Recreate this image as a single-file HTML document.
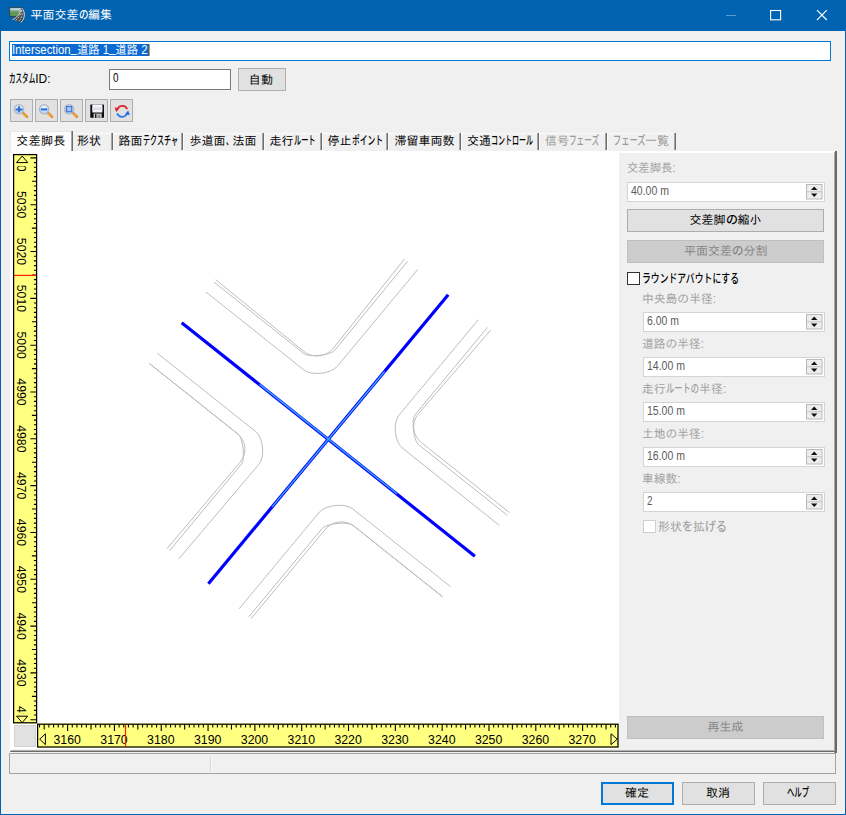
<!DOCTYPE html><html lang="ja"><head><meta charset="utf-8"><title>平面交差の編集</title><style>
html,body{margin:0;padding:0;}
body{width:846px;height:815px;position:relative;overflow:hidden;background:#f0f0f0;font-family:"Liberation Sans","IPAGothic",sans-serif;}
.t{position:absolute;white-space:pre;transform-origin:0 50%;}
.k{display:inline-block;transform-origin:0 50%;font-family:"Liberation Sans","Noto Sans CJK JP",sans-serif;font-weight:500;}
</style></head><body>
<div style="position:absolute;left:0px;top:0px;width:846px;height:815px;background:#0063b1;"></div>
<div style="position:absolute;left:1px;top:31px;width:844px;height:783px;background:#f0f0f0;"></div>
<span class="t" id="title" style="left:30.5px;top:9.0px;font-size:12px;line-height:12px;color:#fff;">平面交差<span class="k" style="transform:scaleX(0.7906);margin-right:-2.52px">の</span>編集</span>
<svg style="position:absolute;left:700px;top:0" width="146" height="31" viewBox="700 0 146 31">
<line x1="726" y1="15.5" x2="736" y2="15.5" stroke="#5a9ad0" stroke-width="1"/>
<rect x="770.6" y="10.5" width="10" height="9.3" fill="none" stroke="#fff" stroke-width="1.1"/>
<path d="M817 10.2 L826.8 20 M826.8 10.2 L817 20" stroke="#fff" stroke-width="1.15" fill="none"/>
</svg>
<svg style="position:absolute;left:8px;top:6px" width="20" height="18" viewBox="8 6 20 18">
<rect x="9.7" y="7.7" width="12" height="8.7" fill="#5d9a55" stroke="#3c3c3c" stroke-width="0.9"/>
<rect x="10.2" y="8.2" width="11" height="2.3" fill="#bcd8f6"/>
<rect x="10.2" y="10.5" width="11" height="1.3" fill="#8fa07c"/>
<path d="M21.6 8 C25.2 11.5 25.6 18 20.9 22.5 L12.5 19.7 C17 17.6 20.2 14 20.3 9.6 Z" fill="#4d4d4d"/>
<path d="M21.6 8 C25.2 11.5 25.6 18 20.9 22.5" fill="none" stroke="#e6e6e6" stroke-width="0.9"/>
<path d="M12.5 19.7 C17 17.6 20.2 14 20.3 9.6" fill="none" stroke="#e6e6e6" stroke-width="0.9"/>
<path d="M21.3 10 C23 13.5 22 18.5 18.2 21.6" fill="none" stroke="#f2f2f2" stroke-width="0.8" stroke-dasharray="1.8 1.5"/>
<path d="M20.9 10.5 C21 14.5 18.8 18.6 15.3 20.6" fill="none" stroke="#f2f2f2" stroke-width="0.8" stroke-dasharray="1.8 1.5"/>
</svg>
<div style="position:absolute;left:9px;top:41px;width:822px;height:20px;background:#fff;border:1px solid #0078d7;box-sizing:border-box;"></div>
<div style="position:absolute;left:11.5px;top:44px;width:137px;height:12.2px;background:#0a6ad2;"></div>
<div style="position:absolute;left:148.5px;top:44px;width:1px;height:12.2px;background:#e0923a;"></div>
<span class="t" id="name" style="left:12px;top:44px;font-size:12px;line-height:12px;color:#fff;transform:scaleX(0.9446);">Intersection<span style="position:relative;top:-1.6px">_</span>道路 1<span style="position:relative;top:-1.6px">_</span>道路 2</span>
<span class="t" id="cid" style="left:9px;top:73px;font-size:12px;line-height:12px;color:#000;"><span class="k" style="transform:scaleX(0.5468);margin-right:-21.76px">カスタム</span>ID:</span>
<div style="position:absolute;left:109px;top:69px;width:122px;height:21px;background:#fff;border:1px solid #7a7a7a;box-sizing:border-box;"></div>
<span class="t" id="cidv" style="left:112.5px;top:72px;font-size:12px;line-height:12px;color:#000;transform:scaleX(0.8224);">0</span>
<div style="position:absolute;left:238px;top:68px;width:48px;height:23px;background:#e1e1e1;border:1px solid #adadad;box-sizing:border-box;"></div>
<span class="t" id="auto" style="left:248.7px;top:73.5px;font-size:12px;line-height:12px;color:#000;letter-spacing:0.3px;">自動</span>
<div style="position:absolute;left:10px;top:99px;width:23px;height:23px;background:#e1e1e1;border:1px solid #adadad;box-sizing:border-box;"></div>
<div style="position:absolute;left:35px;top:99px;width:23px;height:23px;background:#e1e1e1;border:1px solid #adadad;box-sizing:border-box;"></div>
<div style="position:absolute;left:60px;top:99px;width:23px;height:23px;background:#e1e1e1;border:1px solid #adadad;box-sizing:border-box;"></div>
<div style="position:absolute;left:85px;top:99px;width:23px;height:23px;background:#e1e1e1;border:1px solid #adadad;box-sizing:border-box;"></div>
<div style="position:absolute;left:110px;top:99px;width:23px;height:23px;background:#e1e1e1;border:1px solid #adadad;box-sizing:border-box;"></div>
<svg style="position:absolute;left:10px;top:99px" width="125" height="23" viewBox="10 99 125 23"><defs><radialGradient id="lens" cx="0.5" cy="0.3" r="0.75"><stop offset="0" stop-color="#f4f9ff"/><stop offset="1" stop-color="#9cc6f8"/></radialGradient></defs><g transform="translate(0,109.2)"><g transform="translate(19.1,0)">
<line x1="4" y1="4" x2="7.8" y2="7.7" stroke="#cf6a2a" stroke-width="2.5" stroke-linecap="round"/>
<line x1="3.9" y1="4.2" x2="7.6" y2="7.9" stroke="#f8ae2c" stroke-width="1.6" stroke-linecap="round"/>
<circle cx="0" cy="0.1" r="4.7" fill="url(#lens)" stroke="#b2b4b8" stroke-width="1.1"/>
<path d="M-3.4 0.2H3.4M0 -2.9V3" stroke="#2c6cd2" stroke-width="2"/></g><g transform="translate(44.1,0)">
<line x1="4" y1="4" x2="7.8" y2="7.7" stroke="#cf6a2a" stroke-width="2.5" stroke-linecap="round"/>
<line x1="3.9" y1="4.2" x2="7.6" y2="7.9" stroke="#f8ae2c" stroke-width="1.6" stroke-linecap="round"/>
<circle cx="0" cy="0.1" r="4.7" fill="url(#lens)" stroke="#b2b4b8" stroke-width="1.1"/>
<path d="M-3.2 0.2H3.2" stroke="#2c6cd2" stroke-width="2"/></g><g transform="translate(69.1,0)">
<line x1="4" y1="4" x2="7.8" y2="7.7" stroke="#cf6a2a" stroke-width="2.5" stroke-linecap="round"/>
<line x1="3.9" y1="4.2" x2="7.6" y2="7.9" stroke="#f8ae2c" stroke-width="1.6" stroke-linecap="round"/>
<circle cx="0" cy="0.1" r="4.7" fill="url(#lens)" stroke="#b2b4b8" stroke-width="1.1"/>
<rect x="-2.6" y="-2.7" width="5.2" height="5.2" fill="#a8c4f2" stroke="#3a76dc" stroke-width="1.2"/></g></g><g>
<rect x="90.3" y="104.5" width="13.7" height="13.3" rx="0.6" fill="#0c0c0c"/>
<rect x="92.3" y="104.5" width="10.1" height="8" fill="#f2f4f8"/>
<rect x="92.3" y="107.4" width="10.1" height="2.6" fill="#d9deea"/>
<rect x="93.6" y="113.6" width="8" height="4.2" fill="#d8d8d8"/>
<rect x="95" y="114.2" width="1.4" height="3.6" fill="#111"/>
<rect x="97.6" y="114.6" width="0.8" height="3.2" fill="#555"/>
<rect x="99.4" y="114.6" width="0.8" height="3.2" fill="#555"/>
</g><g fill="none" stroke-width="1.7">
<path d="M127.2 109.2 A5.3 5.3 0 0 0 117.6 108.6" stroke="#e02a2a"/>
<path d="M114.6 107.6 L119.6 108.2 L116.2 112 Z" fill="#e02020" stroke="none"/>
<path d="M117.2 113.4 A5.3 5.3 0 0 0 126.8 114.2" stroke="#2a7af0"/>
<path d="M129.8 115 L124.8 114.4 L128.2 110.4 Z" fill="#1a6af0" stroke="none"/>
</g></svg>
<div style="position:absolute;left:10px;top:151px;width:826px;height:602px;background:#f0f0f0;border-top:2px solid #fff;border-left:2px solid #fff;box-sizing:border-box;"></div>
<div style="position:absolute;left:834px;top:152px;width:1.2px;height:601px;background:#a8a8a8;"></div>
<div style="position:absolute;left:835.2px;top:151px;width:1.7px;height:602px;background:#6a6a6a;"></div>
<div style="position:absolute;left:11px;top:749.5px;width:824px;height:1.1px;background:#b0b0b0;"></div>
<div style="position:absolute;left:9.5px;top:750.6px;width:827.4px;height:1.75px;background:#6a6a6a;"></div>
<div style="position:absolute;left:110.5px;top:133.2px;width:1px;height:17px;background:#a6a6a6;"></div>
<div style="position:absolute;left:111.5px;top:133.2px;width:1px;height:17px;background:#6e6e6e;"></div>
<div style="position:absolute;left:180.5px;top:133.2px;width:1px;height:17px;background:#a6a6a6;"></div>
<div style="position:absolute;left:181.5px;top:133.2px;width:1px;height:17px;background:#6e6e6e;"></div>
<div style="position:absolute;left:261.5px;top:133.2px;width:1px;height:17px;background:#a6a6a6;"></div>
<div style="position:absolute;left:262.5px;top:133.2px;width:1px;height:17px;background:#6e6e6e;"></div>
<div style="position:absolute;left:319.5px;top:133.2px;width:1px;height:17px;background:#a6a6a6;"></div>
<div style="position:absolute;left:320.5px;top:133.2px;width:1px;height:17px;background:#6e6e6e;"></div>
<div style="position:absolute;left:386.0px;top:133.2px;width:1px;height:17px;background:#a6a6a6;"></div>
<div style="position:absolute;left:387.0px;top:133.2px;width:1px;height:17px;background:#6e6e6e;"></div>
<div style="position:absolute;left:459.0px;top:133.2px;width:1px;height:17px;background:#a6a6a6;"></div>
<div style="position:absolute;left:460.0px;top:133.2px;width:1px;height:17px;background:#6e6e6e;"></div>
<div style="position:absolute;left:537.0px;top:133.2px;width:1px;height:17px;background:#a6a6a6;"></div>
<div style="position:absolute;left:538.0px;top:133.2px;width:1px;height:17px;background:#6e6e6e;"></div>
<div style="position:absolute;left:605.0px;top:133.2px;width:1px;height:17px;background:#a6a6a6;"></div>
<div style="position:absolute;left:606.0px;top:133.2px;width:1px;height:17px;background:#6e6e6e;"></div>
<div style="position:absolute;left:674.0px;top:133.2px;width:1px;height:17px;background:#a6a6a6;"></div>
<div style="position:absolute;left:675.0px;top:133.2px;width:1px;height:17px;background:#6e6e6e;"></div>
<div style="position:absolute;left:73.1px;top:133px;width:36.900000000000006px;height:1px;background:#fafafa;"></div>
<div style="position:absolute;left:112.5px;top:133px;width:67.5px;height:1px;background:#fafafa;"></div>
<div style="position:absolute;left:112.5px;top:134px;width:1px;height:16.5px;background:#fafafa;"></div>
<div style="position:absolute;left:182.5px;top:133px;width:78.5px;height:1px;background:#fafafa;"></div>
<div style="position:absolute;left:182.5px;top:134px;width:1px;height:16.5px;background:#fafafa;"></div>
<div style="position:absolute;left:263.5px;top:133px;width:55.5px;height:1px;background:#fafafa;"></div>
<div style="position:absolute;left:263.5px;top:134px;width:1px;height:16.5px;background:#fafafa;"></div>
<div style="position:absolute;left:321.5px;top:133px;width:64.0px;height:1px;background:#fafafa;"></div>
<div style="position:absolute;left:321.5px;top:134px;width:1px;height:16.5px;background:#fafafa;"></div>
<div style="position:absolute;left:388.0px;top:133px;width:70.5px;height:1px;background:#fafafa;"></div>
<div style="position:absolute;left:388.0px;top:134px;width:1px;height:16.5px;background:#fafafa;"></div>
<div style="position:absolute;left:461.0px;top:133px;width:75.5px;height:1px;background:#fafafa;"></div>
<div style="position:absolute;left:461.0px;top:134px;width:1px;height:16.5px;background:#fafafa;"></div>
<div style="position:absolute;left:539.0px;top:133px;width:65.5px;height:1px;background:#fafafa;"></div>
<div style="position:absolute;left:539.0px;top:134px;width:1px;height:16.5px;background:#fafafa;"></div>
<div style="position:absolute;left:607.0px;top:133px;width:66.5px;height:1px;background:#fafafa;"></div>
<div style="position:absolute;left:607.0px;top:134px;width:1px;height:16.5px;background:#fafafa;"></div>
<div style="position:absolute;left:10px;top:131px;width:62.5px;height:22px;background:#fdfdfd;border-top:1px solid #e8e8e8;border-left:1px solid #e8e8e8;box-sizing:border-box;"></div>
<div style="position:absolute;left:70.6px;top:131.3px;width:1px;height:20px;background:#a6a6a6;"></div>
<div style="position:absolute;left:71.6px;top:131.3px;width:1px;height:20px;background:#6e6e6e;"></div>
<span class="t" id="tab1" style="left:16.3px;top:134.6px;font-size:12px;line-height:12px;color:#000;letter-spacing:0.35px;">交差脚長</span>
<span class="t" id="tab2" style="left:77px;top:135.4px;font-size:12px;line-height:12px;color:#000;">形状</span>
<span class="t" id="tab3" style="left:118.5px;top:135.4px;font-size:12px;line-height:12px;color:#000;">路面<span class="k" style="transform:scaleX(0.5879);margin-right:-24.53px">テクスチャ</span></span>
<span class="t" id="tab4" style="left:189.5px;top:135.4px;font-size:12px;line-height:12px;color:#000;">歩道面<span class="k" style="transform:scaleX(0.5826);margin-right:-5.02px">、</span>法面</span>
<span class="t" id="tab5" style="left:269.5px;top:135.4px;font-size:12px;line-height:12px;color:#000;">走行<span class="k" style="transform:scaleX(0.5970);margin-right:-14.52px">ルート</span></span>
<span class="t" id="tab6" style="left:327.5px;top:135.4px;font-size:12px;line-height:12px;color:#000;">停止<span class="k" style="transform:scaleX(0.6456);margin-right:-17.02px">ポイント</span></span>
<span class="t" id="tab7" style="left:394.5px;top:135.4px;font-size:12px;line-height:12px;color:#000;">滞留車両数</span>
<span class="t" id="tab8" style="left:467px;top:135.4px;font-size:12px;line-height:12px;color:#000;">交通<span class="k" style="transform:scaleX(0.5832);margin-right:-30.02px">コントロール</span></span>
<span class="t" id="tab9" style="left:545px;top:135.4px;font-size:12px;line-height:12px;color:#9a9a9a;">信号<span class="k" style="transform:scaleX(0.6328);margin-right:-17.41px">フェーズ</span></span>
<span class="t" id="tab10" style="left:612.5px;top:135.4px;font-size:12px;line-height:12px;color:#9a9a9a;"><span class="k" style="transform:scaleX(0.6856);margin-right:-14.91px">フェーズ</span>一覧</span>
<div style="position:absolute;left:12px;top:153px;width:606.7px;height:596.3px;background:#fff;"></div>
<svg style="position:absolute;left:0;top:0" width="846" height="815" viewBox="0 0 846 815">
<g fill="none" stroke="#bdbdbd" stroke-width="1">
<path d="M206.0 292.0L303.8 369.9C311.3 375.9 331.0 373.9 337.2 366.4L417.6 269.6"/>
<path d="M213.9 282.0L303.9 353.6C308.8 357.5 330.5 355.3 334.5 350.5L407.6 261.3"/>
<path d="M215.7 279.7L303.6 351.2C313.0 358.6 325.8 357.3 333.4 348.1L404.7 258.8"/>
<path d="M499.4 525.4L402.3 448.0C394.7 442.0 392.7 422.7 398.9 415.3L478.2 319.8"/>
<path d="M507.4 515.4L418.3 444.4C413.4 440.5 411.2 419.3 415.2 414.5L487.4 327.5"/>
<path d="M509.5 512.7L421.6 442.7C412.3 435.3 411.0 422.7 418.6 413.5L490.6 330.2"/>
<path d="M157.2 353.1L255.6 431.5C263.2 437.5 265.2 456.8 259.0 464.2L178.9 558.8"/>
<path d="M149.1 363.3L238.3 434.3C243.1 438.2 245.3 459.4 241.4 464.2L169.4 550.9"/>
<path d="M149.1 363.3L236.9 433.2C246.2 440.6 247.5 453.2 239.9 462.4L166.9 548.8"/>
<path d="M450.6 586.7L352.7 508.8C345.1 502.8 325.4 504.8 319.3 512.2L239.1 608.8"/>
<path d="M442.6 596.8L352.8 525.2C347.9 521.3 326.2 523.6 322.2 528.4L248.8 616.8"/>
<path d="M442.6 596.8L354.7 526.7C345.3 519.3 332.5 520.6 324.8 529.8L251.0 618.7"/>
</g>
<g stroke="#0000ff" stroke-width="3.2" fill="none"><line x1="181.7" y1="322.7" x2="474.9" y2="556.2"/><line x1="208.4" y1="583.7" x2="448.2" y2="294.8"/></g>
<g stroke="#3aa8ff" stroke-width="1.4" fill="none"><line x1="259.6" y1="384.4" x2="397.2" y2="494.0"/><line x1="272.2" y1="506.9" x2="384.6" y2="371.5"/></g>
<rect x="13" y="154" width="24" height="569.4" fill="#ffff80"/>
<rect x="37" y="723.6" width="581.6" height="24" fill="#ffff80"/>
<defs><clipPath id="cv"><rect x="14" y="155" width="22" height="567.5"/></clipPath><clipPath id="ch"><rect x="38" y="724.5" width="579.5" height="22"/></clipPath></defs>
<g font-family="Liberation Sans, sans-serif" font-size="12.3" fill="#000" text-anchor="middle">
<g clip-path="url(#cv)">
<text transform="translate(17.2 719.7) rotate(90)">4920</text>
<text transform="translate(17.2 672.9) rotate(90)">4930</text>
<text transform="translate(17.2 626.1) rotate(90)">4940</text>
<text transform="translate(17.2 579.3) rotate(90)">4950</text>
<text transform="translate(17.2 532.5) rotate(90)">4960</text>
<text transform="translate(17.2 485.6) rotate(90)">4970</text>
<text transform="translate(17.2 438.8) rotate(90)">4980</text>
<text transform="translate(17.2 392.0) rotate(90)">4990</text>
<text transform="translate(17.2 345.2) rotate(90)">5000</text>
<text transform="translate(17.2 298.4) rotate(90)">5010</text>
<text transform="translate(17.2 251.5) rotate(90)">5020</text>
<text transform="translate(17.2 204.7) rotate(90)">5030</text>
<text transform="translate(17.2 157.9) rotate(90)">5040</text>
</g><g clip-path="url(#ch)">
<text x="20.4" y="744">3150</text>
<text x="67.2" y="744">3160</text>
<text x="114.0" y="744">3170</text>
<text x="160.8" y="744">3180</text>
<text x="207.7" y="744">3190</text>
<text x="254.5" y="744">3200</text>
<text x="301.3" y="744">3210</text>
<text x="348.1" y="744">3220</text>
<text x="394.9" y="744">3230</text>
<text x="441.8" y="744">3240</text>
<text x="488.6" y="744">3250</text>
<text x="535.4" y="744">3260</text>
<text x="582.2" y="744">3270</text>
<text x="629.0" y="744">3280</text>
</g></g>
<rect x="14" y="155" width="16" height="11.2" fill="#ffff80"/>
<rect x="14" y="713.2" width="16" height="9.3" fill="#ffff80"/>
<rect x="38" y="731.5" width="9.5" height="15" fill="#ffff80"/>
<rect x="609" y="731.5" width="8.5" height="15" fill="#ffff80"/>
<g fill="none" stroke="#000" stroke-width="1.25">
<rect x="13.6" y="154.6" width="23" height="568.2"/>
<rect x="37.6" y="724.2" width="580.4" height="22.8"/>
</g>
<path d="M30.4 719.74H36.4M33.9 715.06H36.4M33.9 710.38H36.4M33.9 705.69H36.4M33.9 701.01H36.4M31.9 696.33H36.4M33.9 691.65H36.4M33.9 686.97H36.4M33.9 682.28H36.4M33.9 677.60H36.4M30.4 672.92H36.4M33.9 668.24H36.4M33.9 663.56H36.4M33.9 658.87H36.4M33.9 654.19H36.4M31.9 649.51H36.4M33.9 644.83H36.4M33.9 640.15H36.4M33.9 635.46H36.4M33.9 630.78H36.4M30.4 626.10H36.4M33.9 621.42H36.4M33.9 616.74H36.4M33.9 612.05H36.4M33.9 607.37H36.4M31.9 602.69H36.4M33.9 598.01H36.4M33.9 593.33H36.4M33.9 588.64H36.4M33.9 583.96H36.4M30.4 579.28H36.4M33.9 574.60H36.4M33.9 569.92H36.4M33.9 565.23H36.4M33.9 560.55H36.4M31.9 555.87H36.4M33.9 551.19H36.4M33.9 546.51H36.4M33.9 541.82H36.4M33.9 537.14H36.4M30.4 532.46H36.4M33.9 527.78H36.4M33.9 523.10H36.4M33.9 518.41H36.4M33.9 513.73H36.4M31.9 509.05H36.4M33.9 504.37H36.4M33.9 499.69H36.4M33.9 495.00H36.4M33.9 490.32H36.4M30.4 485.64H36.4M33.9 480.96H36.4M33.9 476.28H36.4M33.9 471.59H36.4M33.9 466.91H36.4M31.9 462.23H36.4M33.9 457.55H36.4M33.9 452.87H36.4M33.9 448.18H36.4M33.9 443.50H36.4M30.4 438.82H36.4M33.9 434.14H36.4M33.9 429.46H36.4M33.9 424.77H36.4M33.9 420.09H36.4M31.9 415.41H36.4M33.9 410.73H36.4M33.9 406.05H36.4M33.9 401.36H36.4M33.9 396.68H36.4M30.4 392.00H36.4M33.9 387.32H36.4M33.9 382.64H36.4M33.9 377.95H36.4M33.9 373.27H36.4M31.9 368.59H36.4M33.9 363.91H36.4M33.9 359.23H36.4M33.9 354.54H36.4M33.9 349.86H36.4M30.4 345.18H36.4M33.9 340.50H36.4M33.9 335.82H36.4M33.9 331.13H36.4M33.9 326.45H36.4M31.9 321.77H36.4M33.9 317.09H36.4M33.9 312.41H36.4M33.9 307.72H36.4M33.9 303.04H36.4M30.4 298.36H36.4M33.9 293.68H36.4M33.9 289.00H36.4M33.9 284.31H36.4M33.9 279.63H36.4M31.9 274.95H36.4M33.9 270.27H36.4M33.9 265.59H36.4M33.9 260.90H36.4M33.9 256.22H36.4M30.4 251.54H36.4M33.9 246.86H36.4M33.9 242.18H36.4M33.9 237.49H36.4M33.9 232.81H36.4M31.9 228.13H36.4M33.9 223.45H36.4M33.9 218.77H36.4M33.9 214.08H36.4M33.9 209.40H36.4M30.4 204.72H36.4M33.9 200.04H36.4M33.9 195.36H36.4M33.9 190.67H36.4M33.9 185.99H36.4M31.9 181.31H36.4M33.9 176.63H36.4M33.9 171.95H36.4M33.9 167.26H36.4M33.9 162.58H36.4M30.4 157.90H36.4M39.51 724.4V727.4M44.19 724.4V729.4M48.87 724.4V727.4M53.55 724.4V727.4M58.24 724.4V727.4M62.92 724.4V727.4M67.60 724.4V730.9M72.28 724.4V727.4M76.96 724.4V727.4M81.65 724.4V727.4M86.33 724.4V727.4M91.01 724.4V729.4M95.69 724.4V727.4M100.37 724.4V727.4M105.06 724.4V727.4M109.74 724.4V727.4M114.42 724.4V730.9M119.10 724.4V727.4M123.78 724.4V727.4M128.47 724.4V727.4M133.15 724.4V727.4M137.83 724.4V729.4M142.51 724.4V727.4M147.19 724.4V727.4M151.88 724.4V727.4M156.56 724.4V727.4M161.24 724.4V730.9M165.92 724.4V727.4M170.60 724.4V727.4M175.29 724.4V727.4M179.97 724.4V727.4M184.65 724.4V729.4M189.33 724.4V727.4M194.01 724.4V727.4M198.70 724.4V727.4M203.38 724.4V727.4M208.06 724.4V730.9M212.74 724.4V727.4M217.42 724.4V727.4M222.11 724.4V727.4M226.79 724.4V727.4M231.47 724.4V729.4M236.15 724.4V727.4M240.83 724.4V727.4M245.52 724.4V727.4M250.20 724.4V727.4M254.88 724.4V730.9M259.56 724.4V727.4M264.24 724.4V727.4M268.93 724.4V727.4M273.61 724.4V727.4M278.29 724.4V729.4M282.97 724.4V727.4M287.65 724.4V727.4M292.34 724.4V727.4M297.02 724.4V727.4M301.70 724.4V730.9M306.38 724.4V727.4M311.06 724.4V727.4M315.75 724.4V727.4M320.43 724.4V727.4M325.11 724.4V729.4M329.79 724.4V727.4M334.47 724.4V727.4M339.16 724.4V727.4M343.84 724.4V727.4M348.52 724.4V730.9M353.20 724.4V727.4M357.88 724.4V727.4M362.57 724.4V727.4M367.25 724.4V727.4M371.93 724.4V729.4M376.61 724.4V727.4M381.29 724.4V727.4M385.98 724.4V727.4M390.66 724.4V727.4M395.34 724.4V730.9M400.02 724.4V727.4M404.70 724.4V727.4M409.39 724.4V727.4M414.07 724.4V727.4M418.75 724.4V729.4M423.43 724.4V727.4M428.11 724.4V727.4M432.80 724.4V727.4M437.48 724.4V727.4M442.16 724.4V730.9M446.84 724.4V727.4M451.52 724.4V727.4M456.21 724.4V727.4M460.89 724.4V727.4M465.57 724.4V729.4M470.25 724.4V727.4M474.93 724.4V727.4M479.62 724.4V727.4M484.30 724.4V727.4M488.98 724.4V730.9M493.66 724.4V727.4M498.34 724.4V727.4M503.03 724.4V727.4M507.71 724.4V727.4M512.39 724.4V729.4M517.07 724.4V727.4M521.75 724.4V727.4M526.44 724.4V727.4M531.12 724.4V727.4M535.80 724.4V730.9M540.48 724.4V727.4M545.16 724.4V727.4M549.85 724.4V727.4M554.53 724.4V727.4M559.21 724.4V729.4M563.89 724.4V727.4M568.57 724.4V727.4M573.26 724.4V727.4M577.94 724.4V727.4M582.62 724.4V730.9M587.30 724.4V727.4M591.98 724.4V727.4M596.67 724.4V727.4M601.35 724.4V727.4M606.03 724.4V729.4M610.71 724.4V727.4M615.39 724.4V727.4" stroke="#000" stroke-width="1.1" fill="none"/>
<g fill="none" stroke="#000" stroke-width="1">
<path d="M22.2 156 L27.8 162.6 H16.5 Z"/>
<path d="M22.2 722.6 L27.7 716.2 H16.6 Z"/>
<path d="M39.7 739.2 L45.4 733.8 V744.6 Z"/>
<path d="M617.3 739.2 L611 733.8 V744.6 Z"/>
</g>
<line x1="14" y1="275.4" x2="36" y2="275.4" stroke="#ff2000" stroke-width="1.2"/>
<line x1="125.5" y1="724.5" x2="125.5" y2="746.5" stroke="#ff2000" stroke-width="1.2"/>
<rect x="14.5" y="725.5" width="21" height="21" fill="#e1e1e1" stroke="#d2d2d2"/>
</svg>
<span class="t" id="l0" style="left:626.5px;top:162px;font-size:12px;line-height:12px;color:#a1a1a1;transform:scaleX(0.9446);">交差脚長:</span>
<div style="position:absolute;left:627px;top:182px;width:198px;height:20px;background:#fff;border:1px solid #d4d4d4;box-sizing:border-box;"></div>
<span class="t" id="s0" style="left:630.5px;top:185px;font-size:12px;line-height:12px;color:#5c5c5c;transform:scaleX(0.8764);">40.00 m</span>
<svg style="position:absolute;left:806px;top:184px" width="17" height="16" viewBox="0 0 17 16">
<rect x="0.5" y="0.5" width="15.5" height="14.5" fill="#ededed" stroke="#b9b9b9"/>
<line x1="0.5" y1="7.8" x2="16" y2="7.8" stroke="#c4c4c4"/>
<path d="M5 6 L8.2 2.6 L11.4 6 Z M5 9.6 L8.2 13 L11.4 9.6 Z" fill="#111"/>
</svg>
<div style="position:absolute;left:627px;top:209px;width:197px;height:23px;background:#e1e1e1;border:1px solid #adadad;box-sizing:border-box;"></div>
<span class="t" id="b1" style="left:689.5px;top:213.7px;font-size:12px;line-height:12px;color:#000;">交差脚<span class="k" style="transform:scaleX(0.9987);margin-right:-0.02px">の</span>縮小</span>
<div style="position:absolute;left:627px;top:240px;width:197px;height:23px;background:#cccccc;border:1px solid #bfbfbf;box-sizing:border-box;"></div>
<span class="t" id="b2" style="left:684px;top:244.7px;font-size:12px;line-height:12px;color:#858585;">平面交差<span class="k" style="transform:scaleX(0.9571);margin-right:-0.52px">の</span>分割</span>
<div style="position:absolute;left:627px;top:272px;width:13px;height:13px;background:#fff;border:1px solid #333;box-sizing:border-box;"></div>
<span class="t" id="cb1" style="left:641.5px;top:273px;font-size:12px;line-height:12px;color:#000;"><span class="k" style="transform:scaleX(0.7368);margin-right:-34.66px">ラウンドアバウトにする</span></span>
<span class="t" id="l1" style="left:641.8px;top:292.8px;font-size:12px;line-height:12px;color:#a1a1a1;transform:scaleX(0.9822);">中央島の半径:</span>
<div style="position:absolute;left:643px;top:312px;width:182px;height:20px;background:#fff;border:1px solid #d4d4d4;box-sizing:border-box;"></div>
<span class="t" id="s1" style="left:646.5px;top:315px;font-size:12px;line-height:12px;color:#5c5c5c;transform:scaleX(0.8722);">6.00 m</span>
<svg style="position:absolute;left:806px;top:314px" width="17" height="16" viewBox="0 0 17 16">
<rect x="0.5" y="0.5" width="15.5" height="14.5" fill="#ededed" stroke="#b9b9b9"/>
<line x1="0.5" y1="7.8" x2="16" y2="7.8" stroke="#c4c4c4"/>
<path d="M5 6 L8.2 2.6 L11.4 6 Z M5 9.6 L8.2 13 L11.4 9.6 Z" fill="#111"/>
</svg>
<span class="t" id="l2" style="left:641.8px;top:337.8px;font-size:12px;line-height:12px;color:#a1a1a1;transform:scaleX(0.9788);">道路の半径:</span>
<div style="position:absolute;left:643px;top:357px;width:182px;height:20px;background:#fff;border:1px solid #d4d4d4;box-sizing:border-box;"></div>
<span class="t" id="s2" style="left:646.5px;top:360px;font-size:12px;line-height:12px;color:#5c5c5c;transform:scaleX(0.8764);">14.00 m</span>
<svg style="position:absolute;left:806px;top:359px" width="17" height="16" viewBox="0 0 17 16">
<rect x="0.5" y="0.5" width="15.5" height="14.5" fill="#ededed" stroke="#b9b9b9"/>
<line x1="0.5" y1="7.8" x2="16" y2="7.8" stroke="#c4c4c4"/>
<path d="M5 6 L8.2 2.6 L11.4 6 Z M5 9.6 L8.2 13 L11.4 9.6 Z" fill="#111"/>
</svg>
<span class="t" id="l3" style="left:641.8px;top:382.8px;font-size:12px;line-height:12px;color:#a1a1a1;">走行<span class="k" style="transform:scaleX(0.6905);margin-right:-14.86px">ルートの</span>半径:</span>
<div style="position:absolute;left:643px;top:402px;width:182px;height:20px;background:#fff;border:1px solid #d4d4d4;box-sizing:border-box;"></div>
<span class="t" id="s3" style="left:646.5px;top:405px;font-size:12px;line-height:12px;color:#5c5c5c;transform:scaleX(0.8764);">15.00 m</span>
<svg style="position:absolute;left:806px;top:404px" width="17" height="16" viewBox="0 0 17 16">
<rect x="0.5" y="0.5" width="15.5" height="14.5" fill="#ededed" stroke="#b9b9b9"/>
<line x1="0.5" y1="7.8" x2="16" y2="7.8" stroke="#c4c4c4"/>
<path d="M5 6 L8.2 2.6 L11.4 6 Z M5 9.6 L8.2 13 L11.4 9.6 Z" fill="#111"/>
</svg>
<span class="t" id="l4" style="left:641.8px;top:427.8px;font-size:12px;line-height:12px;color:#a1a1a1;transform:scaleX(0.9788);">土地の半径:</span>
<div style="position:absolute;left:643px;top:447px;width:182px;height:20px;background:#fff;border:1px solid #d4d4d4;box-sizing:border-box;"></div>
<span class="t" id="s4" style="left:646.5px;top:450px;font-size:12px;line-height:12px;color:#5c5c5c;transform:scaleX(0.8764);">16.00 m</span>
<svg style="position:absolute;left:806px;top:449px" width="17" height="16" viewBox="0 0 17 16">
<rect x="0.5" y="0.5" width="15.5" height="14.5" fill="#ededed" stroke="#b9b9b9"/>
<line x1="0.5" y1="7.8" x2="16" y2="7.8" stroke="#c4c4c4"/>
<path d="M5 6 L8.2 2.6 L11.4 6 Z M5 9.6 L8.2 13 L11.4 9.6 Z" fill="#111"/>
</svg>
<span class="t" id="l5" style="left:641.8px;top:472.8px;font-size:12px;line-height:12px;color:#a1a1a1;transform:scaleX(0.9786);">車線数:</span>
<div style="position:absolute;left:643px;top:492px;width:182px;height:20px;background:#fff;border:1px solid #d4d4d4;box-sizing:border-box;"></div>
<span class="t" id="s5" style="left:646.5px;top:495px;font-size:12px;line-height:12px;color:#5c5c5c;transform:scaleX(0.8224);">2</span>
<svg style="position:absolute;left:806px;top:494px" width="17" height="16" viewBox="0 0 17 16">
<rect x="0.5" y="0.5" width="15.5" height="14.5" fill="#ededed" stroke="#b9b9b9"/>
<line x1="0.5" y1="7.8" x2="16" y2="7.8" stroke="#c4c4c4"/>
<path d="M5 6 L8.2 2.6 L11.4 6 Z M5 9.6 L8.2 13 L11.4 9.6 Z" fill="#111"/>
</svg>
<div style="position:absolute;left:643px;top:520px;width:13px;height:13px;background:#fff;border:1px solid #cfcfcf;box-sizing:border-box;"></div>
<span class="t" id="cb2" style="left:658px;top:521px;font-size:12px;line-height:12px;color:#a1a1a1;">形状<span class="k" style="transform:scaleX(0.9159);margin-right:-1.01px">を</span>拡<span class="k" style="transform:scaleX(0.9159);margin-right:-2.02px">げる</span></span>
<div style="position:absolute;left:627px;top:716px;width:197px;height:23px;background:#cccccc;border:1px solid #bfbfbf;box-sizing:border-box;"></div>
<span class="t" id="b3" style="left:707.5px;top:720.8px;font-size:12px;line-height:12px;color:#858585;">再生成</span>
<div style="position:absolute;left:9.3px;top:753px;width:826.7px;height:20.6px;background:#f0f0f0;border:1px solid #a3a3a3;box-sizing:border-box;"></div>
<div style="position:absolute;left:210.3px;top:756px;width:1px;height:16px;background:#d9d9d9;"></div>
<div style="position:absolute;left:211.3px;top:756px;width:1px;height:16px;background:#f9f9f9;"></div>
<div style="position:absolute;left:601px;top:782px;width:73px;height:23px;background:#e1e1e1;border:2px solid #0078d7;box-sizing:border-box;"></div>
<span class="t" id="ok" style="left:625px;top:787px;font-size:12px;line-height:12px;color:#000;">確定</span>
<div style="position:absolute;left:682px;top:782px;width:73px;height:23px;background:#e1e1e1;border:1px solid #adadad;box-sizing:border-box;"></div>
<span class="t" id="cancel" style="left:706px;top:787px;font-size:12px;line-height:12px;color:#000;">取消</span>
<div style="position:absolute;left:763px;top:782px;width:73px;height:23px;background:#e1e1e1;border:1px solid #adadad;box-sizing:border-box;"></div>
<span class="t" id="help" style="left:787px;top:787px;font-size:12px;line-height:12px;color:#000;"><span class="k" style="transform:scaleX(0.6108);margin-right:-14.02px">ヘルプ</span></span>
</body></html>
